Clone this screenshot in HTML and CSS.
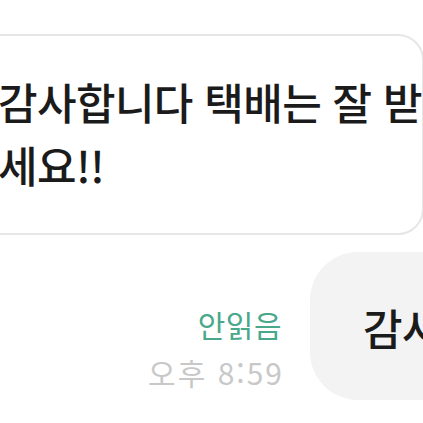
FILE: index.html
```html
<!DOCTYPE html>
<html lang="ko">
<head>
  <meta charset="UTF-8">
  <meta name="viewport" content="width=device-width, initial-scale=1.0">
  <title>채팅</title>
  <link rel="stylesheet" href="styles.css">
</head>
<body>
  <div class="chat">
    <!-- 받은 메시지 -->
    <div class="row received">
      <div class="bubble bubble-in">감사합니다 택배는 잘 받<br>세요!!</div>
    </div>

    <!-- 보낸 메시지 -->
    <div class="row sent">
      <div class="meta">
        <span class="unread">안읽음</span>
        <span class="time">오후 8:59</span>
      </div>
      <div class="bubble bubble-out">감사합니다</div>
    </div>
  </div>
</body>
</html>
```

FILE: styles.css
```css
body {
  margin: 0;
  background: #ffffff;
  font-family: "Noto Sans CJK KR", "Noto Sans", sans-serif;
  color: #1b1b1b;
  overflow: hidden;
}
.chat {
  width: 423px;
  height: 423px;
  overflow: hidden;
  padding-top: 34px;
  box-sizing: border-box;
}
.row {
  display: flex;
}
.received {
  margin-left: -40px;
}
.sent {
  margin-top: 17px;
  justify-content: flex-end;
  align-items: flex-end;
  margin-right: -200px;
}
.bubble {
  font-size: 43px;
  font-weight: 500;
  letter-spacing: -0.6px;
  white-space: nowrap;
}
.bubble-in {
  width: 465px;
  height: 201px;
  box-sizing: border-box;
  padding: 34px 0 0 36px;
  line-height: 63px;
  border: 2px solid #e6e6e6;
  border-radius: 26px;
}
.bubble-out {
  width: 313px;
  height: 148px;
  box-sizing: border-box;
  padding: 46px 0 0 53px;
  line-height: 58px;
  background: #f3f3f3;
  border-radius: 48px;
}
.meta {
  display: flex;
  flex-direction: column;
  align-items: flex-end;
  margin-right: 28px;
  margin-bottom: 4px;
  font-size: 30px;
  line-height: 48px;
}
.unread {
  color: #4aa88a;
  letter-spacing: 0.5px;
}
.time {
  color: #c8c8c8;
  letter-spacing: 2px;
  margin-right: -2px;
}
```
